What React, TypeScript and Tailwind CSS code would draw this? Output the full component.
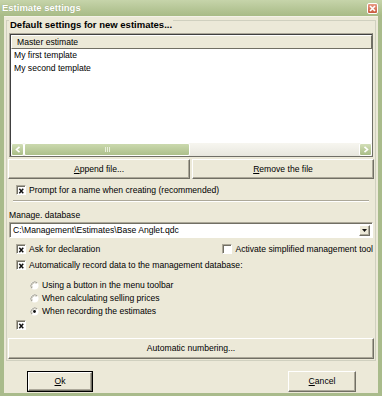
import type { ReactNode } from 'react';

function Check({ checked }: { checked: boolean }) {
  return (
    <span className="flex h-[10px] w-[10px] shrink-0 items-center justify-center border border-t-[#aca899] border-l-[#aca899] border-b-white border-r-white bg-white shadow-[inset_1px_1px_0_#716f64]">
      {checked && (
        <svg width="8" height="8" viewBox="0 0 8 8" className="ml-[1px] mt-[1px]">
          <path d="M1.5 1.5 L6 6.5 M6 1.5 L1.5 6.5" stroke="#111" strokeWidth="1.7" fill="none" />
        </svg>
      )}
    </span>
  );
}

function Radio({ checked }: { checked: boolean }) {
  return (
    <svg width="9" height="9" viewBox="0 0 9 9" className="shrink-0">
      <circle cx="4.5" cy="4.5" r="4" fill="#fff" />
      <path d="M7.3 1.7 A4 4 0 0 0 1.7 7.3" stroke="#9a988c" strokeWidth="1" fill="none" />
      <path d="M6.6 2.4 A3 3 0 0 0 2.4 6.6" stroke="#c9c6b8" strokeWidth="1" fill="none" />
      {checked && <circle cx="4.5" cy="4.5" r="1.4" fill="#111" />}
    </svg>
  );
}

function Btn({ children, className = '' }: { children: ReactNode; className?: string }) {
  return (
    <div
      className={`flex items-center justify-center border border-t-white border-l-white border-r-[#716f64] border-b-[#716f64] bg-[#ece9d8] shadow-[inset_-1px_-1px_0_#aca899] ${className}`}
    >
      {children}
    </div>
  );
}

function ScrollArrow({ dir }: { dir: 'left' | 'right' }) {
  return (
    <div className="flex h-[13px] w-[13px] shrink-0 items-center justify-center rounded-[2px] border border-white bg-gradient-to-b from-[#d3dfb8] to-[#a9bd86]">
      <svg width="6" height="7" viewBox="0 0 6 7">
        <path
          d={dir === 'left' ? 'M4.5 0.8 L1.5 3.5 L4.5 6.2' : 'M1.5 0.8 L4.5 3.5 L1.5 6.2'}
          stroke="#fff"
          strokeWidth="1.6"
          fill="none"
        />
      </svg>
    </div>
  );
}

const radios = [
  { label: 'Using a button in the menu toolbar', checked: false },
  { label: 'When calculating selling prices', checked: false },
  { label: 'When recording the estimates', checked: true },
];

export default function App() {
  return (
    <div className="flex h-[396px] w-[382px] flex-col bg-[#a9bb8b] pb-[3px] text-[8.6px] text-black [font-family:'Liberation_Sans',Arial,sans-serif]">
      {/* Title bar */}
      <div className="flex h-[16px] shrink-0 items-center justify-between bg-gradient-to-b from-[#c6d4aa] to-[#a8bb86] pl-[2px] pr-[4px]">
        <span className="text-[9.5px] font-bold text-white [text-shadow:0_0_1px_#8a9a6c]">Estimate settings</span>
        <div className="flex h-[11px] w-[11px] items-center justify-center rounded-[2px] border border-white bg-gradient-to-b from-[#e89a84] to-[#c85a3e]">
          <svg width="7" height="7" viewBox="0 0 7 7">
            <path d="M1 1 L6 6 M6 1 L1 6" stroke="#fff" strokeWidth="1.6" />
          </svg>
        </div>
      </div>

      {/* Body */}
      <div className="mx-[4px] flex flex-1 flex-col border-t border-[#f4f2e8] bg-[#ece9d8] pt-[3px]">
        {/* Group box */}
        <div className="mx-[2px] flex flex-col border-x border-b border-[#d0d0bf] pb-[1px]">
          <div className="flex h-[13px]">
            <div className="w-[2px] border-t border-[#d0d0bf]" />
            <span className="px-[1px] text-[9.5px] font-bold leading-[9px]">Default settings for new estimates...</span>
            <div className="flex-1 border-t border-[#d0d0bf]" />
          </div>

          {/* List */}
          <div className="mx-[2px] flex h-[124px] flex-col border border-t-[#aca899] border-l-[#aca899] border-b-[#6f6e66] border-r-[#6f6e66] bg-white shadow-[inset_1px_1px_0_#404040]">
            <div className="ml-[1px] mt-[1px] flex h-[14px] items-center border border-t-white border-l-white border-r-[#716f64] border-b-[#716f64] bg-[#ece9d8] pl-[5px]">
              Master estimate
            </div>
            <div className="flex h-[13px] items-center pl-[4px]">My first template</div>
            <div className="flex h-[13px] items-center pl-[4px]">My second template</div>
            <div className="flex-1" />
            <div className="ml-[1px] flex h-[13px] bg-gradient-to-b from-[#f7f6f0] to-[#e8e7de]">
              <ScrollArrow dir="left" />
              <div className="flex flex-1">
                <div className="flex w-[166px] items-center justify-center gap-[1px] rounded-[2px] border border-white bg-gradient-to-b from-[#cbd9ae] to-[#adc08c]">
                  <span className="h-[5px] w-px bg-[#e9f0dc]" />
                  <span className="h-[5px] w-px bg-[#e9f0dc]" />
                  <span className="h-[5px] w-px bg-[#e9f0dc]" />
                </div>
              </div>
              <ScrollArrow dir="right" />
            </div>
          </div>

          {/* Append / Remove */}
          <div className="mx-[1px] mt-[2px] flex h-[20px] gap-[2px]">
            <Btn className="flex-1">
              <span><span className="underline">A</span>ppend file...</span>
            </Btn>
            <Btn className="flex-1">
              <span><span className="underline">R</span>emove the file</span>
            </Btn>
          </div>

          <div className="mt-[5px] flex h-[12px] items-center gap-[3px] pl-[9px]">
            <Check checked />
            <span>Prompt for a name when creating (recommended)</span>
          </div>

          <div className="mx-[6px] mt-[4px] h-[2px] border-t border-b border-t-[#aca899] border-b-white" />

          <div className="mt-[8px] h-[10px] pl-[2px] leading-[10px]">Manage. database</div>

          {/* Combo */}
          <div className="mx-[2px] mt-[2px] flex h-[16px] items-center border border-t-[#aca899] border-l-[#aca899] border-b-white border-r-white bg-white shadow-[inset_1px_1px_0_#716f64]">
            <span className="flex-1 pl-[3px]">C:\Management\Estimates\Base Anglet.qdc</span>
            <Btn className="mr-[2px] h-[11px] w-[11px]">
              <svg width="5" height="3" viewBox="0 0 5 3">
                <path d="M0 0 H5 L2.5 3 Z" fill="#111" />
              </svg>
            </Btn>
          </div>

          <div className="mt-[5px] flex h-[12px] items-center pl-[9px] pr-[2px]">
            <Check checked />
            <span className="ml-[3px]">Ask for declaration</span>
            <div className="ml-auto flex items-center gap-[3px]">
              <Check checked={false} />
              <span>Activate simplified management tool</span>
            </div>
          </div>

          <div className="mt-[4px] flex h-[12px] items-center gap-[3px] pl-[9px]">
            <Check checked />
            <span>Automatically record data to the management database:</span>
          </div>

          <div className="mt-[8px] flex flex-col">
            {radios.map((r) => (
              <div key={r.label} className="flex h-[13px] items-center gap-[3px] pl-[23px]">
                <Radio checked={r.checked} />
                <span>{r.label}</span>
              </div>
            ))}
          </div>

          <div className="mt-[1px] flex h-[12px] items-center pl-[9px]">
            <Check checked />
          </div>

          <Btn className="mx-[1px] mt-[7px] h-[21px]">Automatic numbering...</Btn>
        </div>

        {/* Footer */}
        <div className="mt-[10px] flex h-[21px] justify-between pl-[23px] pr-[22px]">
          <div className="flex w-[66px] border border-black">
            <Btn className="flex-1">
              <span><span className="underline">O</span>k</span>
            </Btn>
          </div>
          <Btn className="w-[68px]">
            <span><span className="underline">C</span>ancel</span>
          </Btn>
        </div>
      </div>
    </div>
  );
}
